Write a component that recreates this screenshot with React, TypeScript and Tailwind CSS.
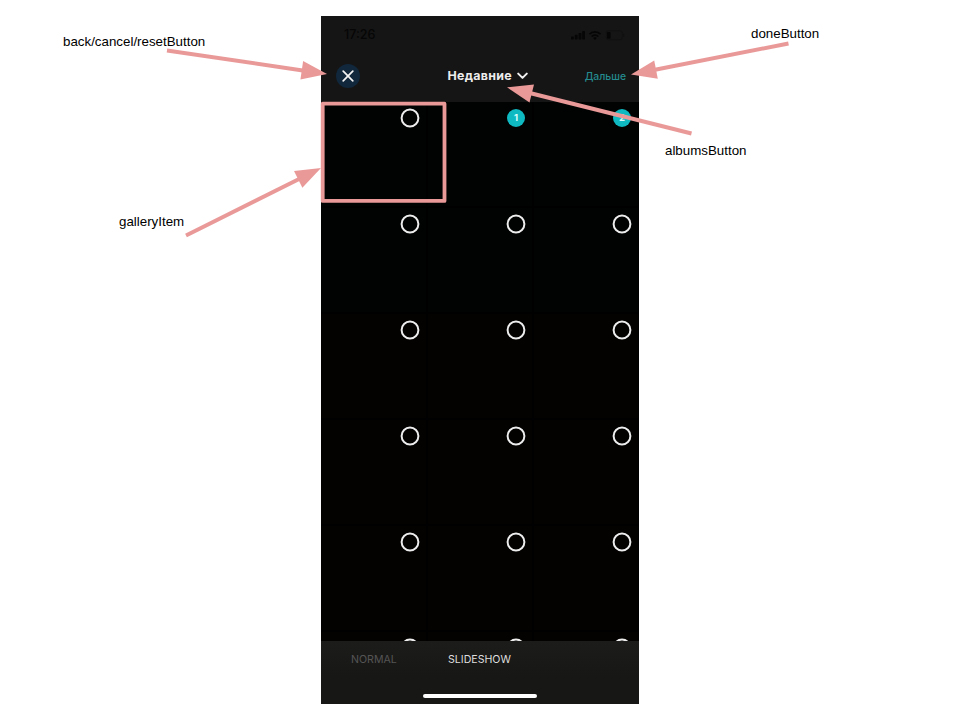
import React from "react";

const PINK = "#ea9999";

function StatusIcons() {
  return (
    <svg width="56" height="12" viewBox="0 0 56 12" fill="#060606">
      <rect x="2" y="7.4" width="2.8" height="3" rx="0.6" />
      <rect x="5.8" y="5.8" width="2.8" height="4.6" rx="0.6" />
      <rect x="9.6" y="4" width="2.8" height="6.4" rx="0.6" />
      <rect x="13.2" y="2" width="2.8" height="8.4" rx="0.6" />
      <g fill="none" stroke="#060606" strokeWidth="1.7">
        <path d="M20.4 5.1a8 8 0 0 1 11.2 0" />
        <path d="M22.6 7.5a4.8 4.8 0 0 1 6.8 0" />
      </g>
      <path d="M24.2 8.9a2.6 2.6 0 0 1 3.6 0L26 10.9z" />
      <rect x="37.3" y="1.7" width="16" height="9" rx="2.2" fill="none" stroke="#0f0f0f" strokeWidth="0.7" />
      <rect x="38" y="2.9" width="3.6" height="6.8" rx="0.9" />
      <rect x="54.2" y="4.7" width="1" height="3" rx="0.5" fill="#0f0f0f" />
    </svg>
  );
}

function Cell({ index, selected }: { index: number; selected?: number }) {
  return (
    <div className={`flex h-[104px] items-start justify-end pt-[6px] pr-[6px] ${index < 6 ? "bg-[#010302]" : "bg-[#030201]"}`}>
      {selected ? (
        <span className="m-px flex size-[18px] items-center justify-center rounded-full bg-[#0fb9c1] text-[9.5px] font-bold leading-none text-[#d8fbfb]">
          {selected}
        </span>
      ) : (
        <svg width="20" height="20" viewBox="0 0 20 20" fill="none">
          <circle cx="10" cy="10" r="8.4" stroke="#ededed" strokeWidth="2" />
        </svg>
      )}
    </div>
  );
}

function Arrow({ from, tip }: { from: [number, number]; tip: [number, number] }) {
  const dx = tip[0] - from[0];
  const dy = tip[1] - from[1];
  const len = Math.hypot(dx, dy);
  const ux = dx / len;
  const uy = dy / len;
  const bx = tip[0] - ux * 25.5;
  const by = tip[1] - uy * 25.5;
  const w = 9.3;
  return (
    <g>
      <line x1={from[0]} y1={from[1]} x2={bx + ux} y2={by + uy} stroke={PINK} strokeWidth="4" />
      <polygon
        points={`${tip[0]},${tip[1]} ${bx - uy * w},${by + ux * w} ${bx + uy * w},${by - ux * w}`}
        fill={PINK}
      />
    </g>
  );
}

export default function App() {
  return (
    <div className="relative flex h-[720px] w-[960px] justify-start overflow-hidden bg-white pt-4 pl-[321px] font-['Liberation_Sans',sans-serif]">
      <div className="flex h-[688px] w-[318px] flex-col overflow-hidden bg-black font-[Inter,sans-serif]">
        <header className="flex h-[86px] shrink-0 flex-col bg-[#151515]">
          <div className="flex h-[38px] items-center justify-between pr-[14px] pl-[23px]">
            <span className="pt-px text-[12.6px] font-medium text-[#060606]">17:26</span>
            <StatusIcons />
          </div>
          <div className="flex h-[44px] items-center pr-[13px] pl-[15px]">
            <button className="flex size-6 items-center justify-center rounded-full bg-[#11273b]">
              <svg width="12" height="12" viewBox="0 0 12 12" stroke="#f3f3f3" strokeWidth="1.7" strokeLinecap="round">
                <path d="M1.2 1.2l9.6 9.6M10.8 1.2L1.2 10.8" />
              </svg>
            </button>
            <button className="ml-[87.5px] flex items-center gap-[5px] text-[12.4px] font-bold tracking-[0.3px] text-[#ececec]">
              <span>Недавние</span>
              <svg width="11" height="8" viewBox="0 0 11 8" fill="none" stroke="#f0f0f0" strokeWidth="2" strokeLinecap="round" strokeLinejoin="round">
                <path d="M1.2 1.6l4.3 4.3 4.3-4.3" />
              </svg>
            </button>
            <button className="ml-auto pt-px text-[10.4px] font-medium text-[#248b8f]">Дальше</button>
          </div>
        </header>
        <main className="grid h-[539px] shrink-0 auto-rows-[104px] grid-cols-[105px_104px_104px] gap-[2px] overflow-hidden bg-black">
          {Array.from({ length: 18 }, (_, i) => (
            <Cell key={i} index={i} selected={i === 1 ? 1 : i === 2 ? 2 : undefined} />
          ))}
        </main>
        <footer className="flex flex-1 flex-col justify-between bg-[linear-gradient(#1c1c1b,#171716_55%)] pt-[12px] pb-[6px]">
          <div className="flex pl-[30px] text-[10.6px] leading-[14px]">
            <span className="w-[97px] text-[#555554]">NORMAL</span>
            <span className="text-[#dededd]">SLIDESHOW</span>
          </div>
          <div className="h-1 w-[114px] self-center rounded-full bg-white" />
        </footer>
      </div>

      <svg className="absolute inset-0" width="960" height="720" viewBox="0 0 960 720">
        <rect x="322.7" y="103.7" width="121.8" height="97.2" fill="none" stroke={PINK} strokeWidth="3.8" strokeLinejoin="round" />
        <Arrow from={[167, 50.5]} tip={[327, 74]} />
        <Arrow from={[186, 235.5]} tip={[321, 168]} />
        <Arrow from={[788.5, 43.5]} tip={[631, 74.5]} />
        <Arrow from={[691.5, 133.5]} tip={[507, 87.3]} />
      </svg>
      <span className="absolute top-[34px] left-[63px] text-[13.33px] leading-4 text-black">back/cancel/resetButton</span>
      <span className="absolute top-[214px] left-[119px] text-[13.33px] leading-4 text-black">galleryItem</span>
      <span className="absolute top-[26px] left-[751px] text-[13.33px] leading-4 text-black">doneButton</span>
      <span className="absolute top-[143px] left-[665px] text-[13.33px] leading-4 text-black">albumsButton</span>
    </div>
  );
}
